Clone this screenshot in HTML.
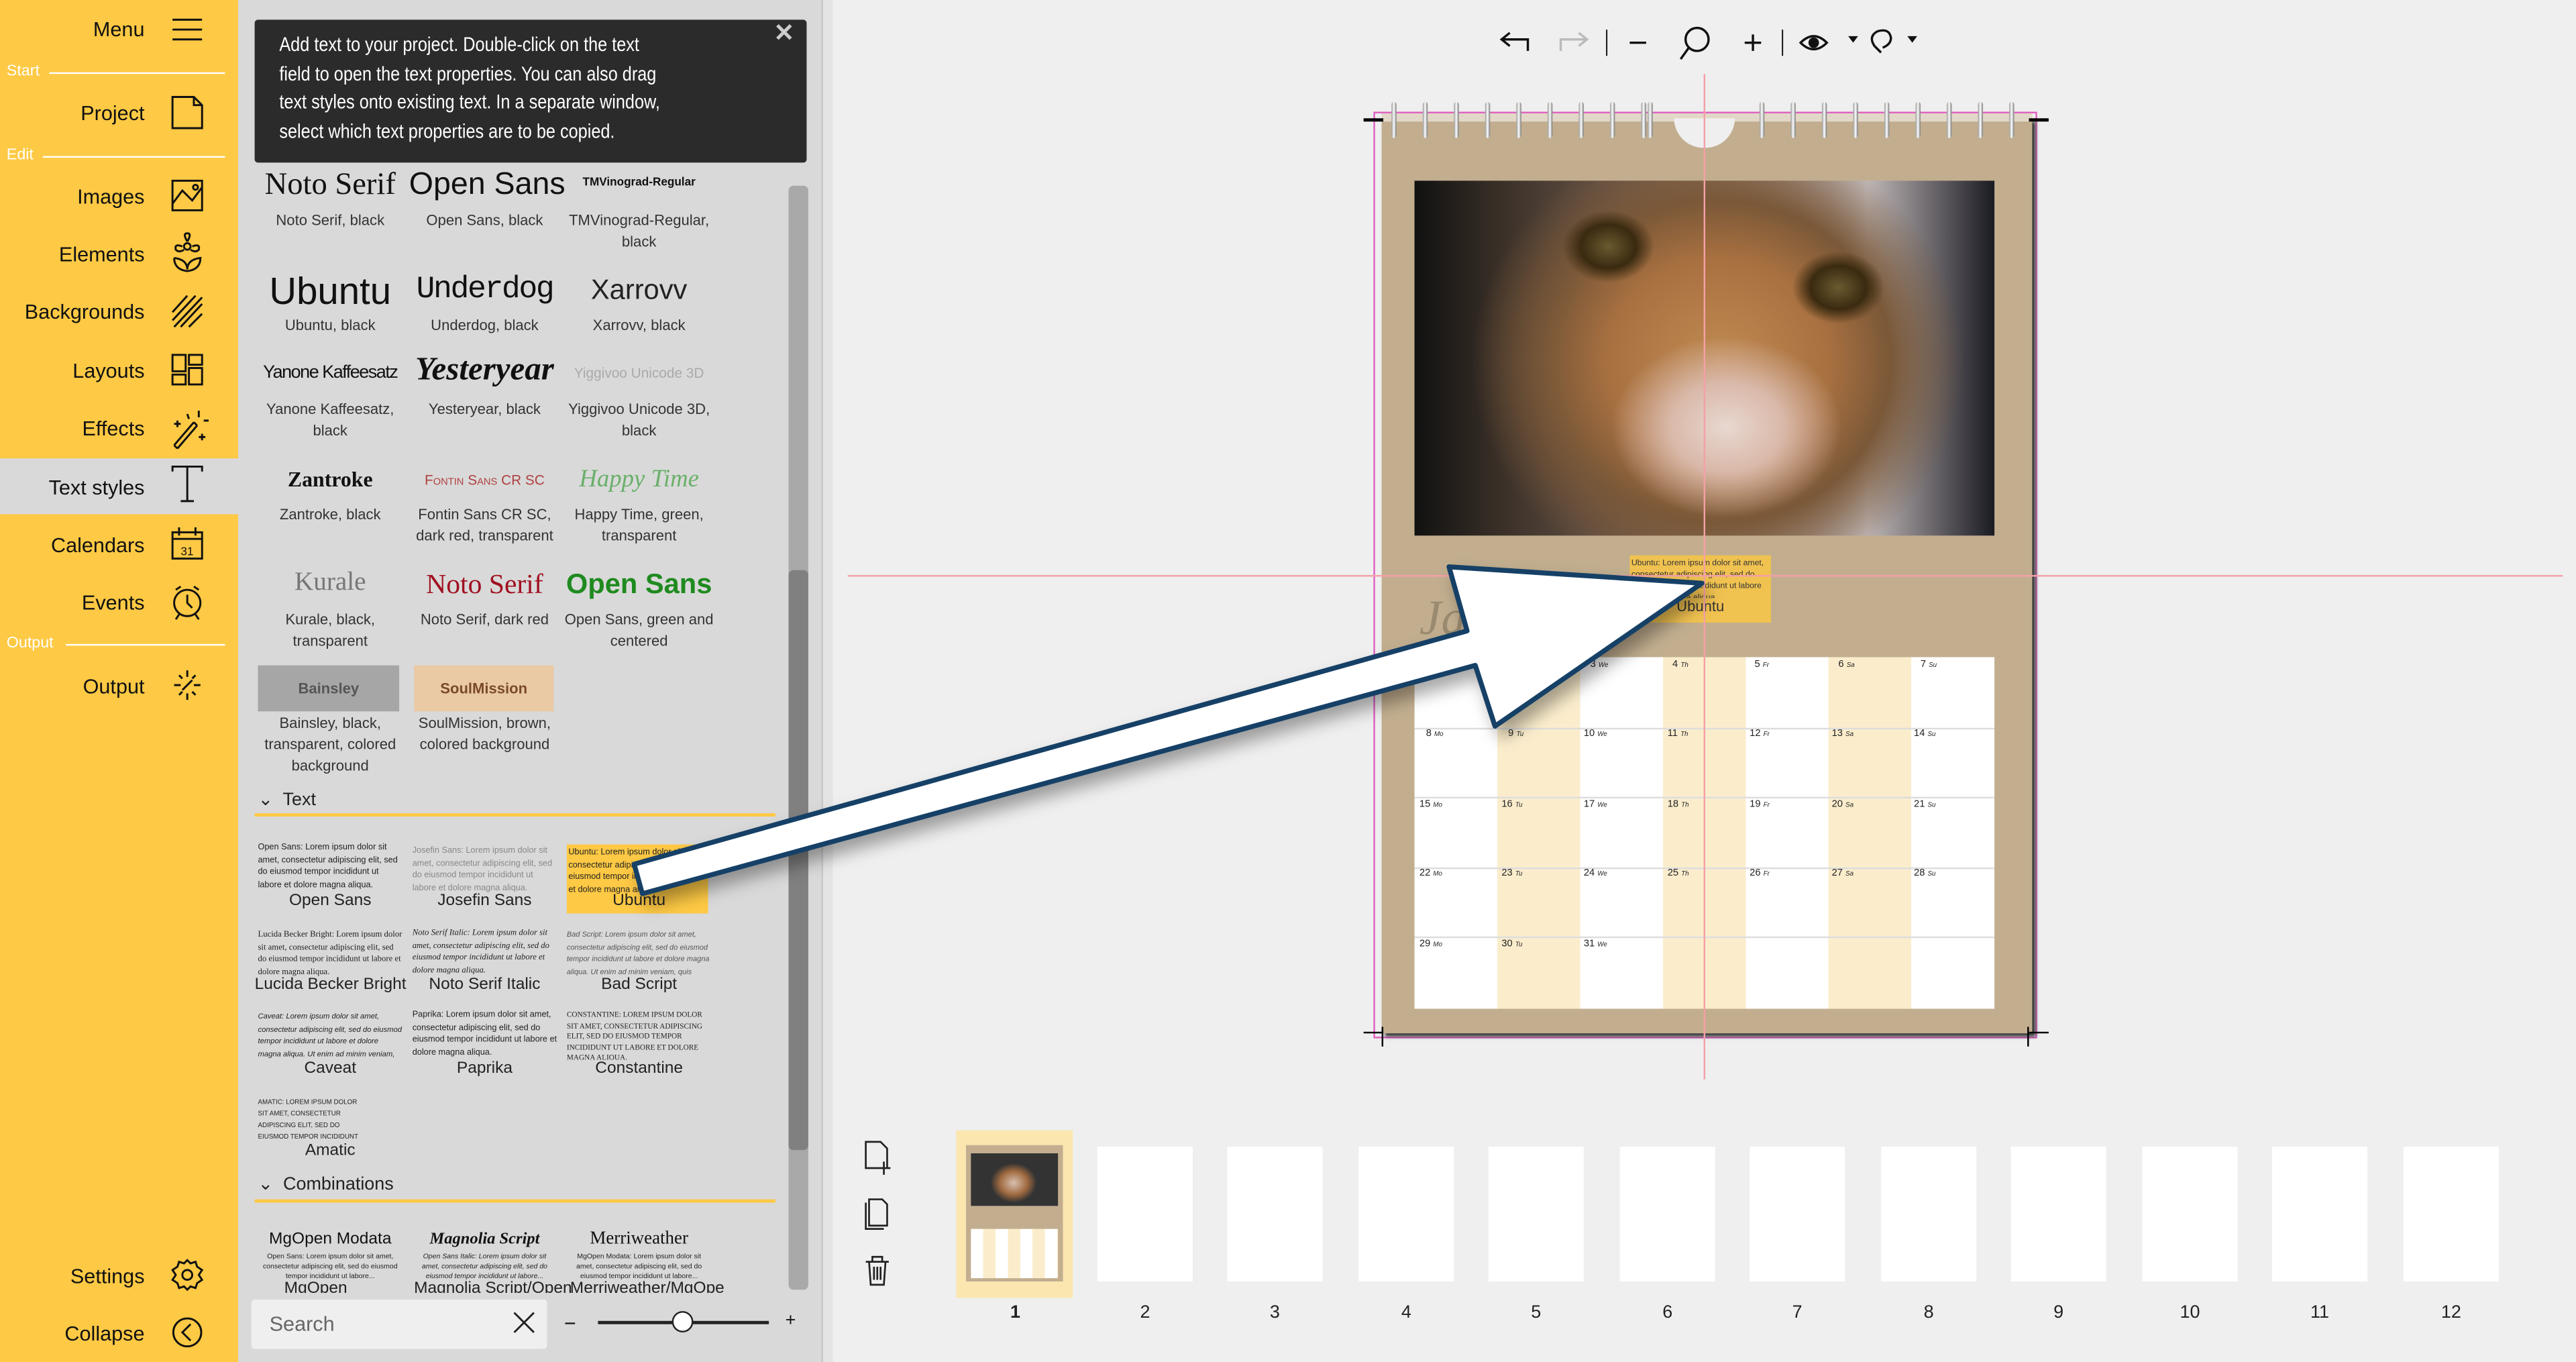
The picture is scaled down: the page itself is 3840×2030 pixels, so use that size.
<!DOCTYPE html>
<html><head><meta charset="utf-8">
<style>
*{margin:0;padding:0;box-sizing:border-box}
html,body{width:3840px;height:2030px;overflow:hidden;background:#efefef}
#w{position:absolute;left:0;top:0;width:1568px;height:829px;transform:scale(2.44898,2.4487);transform-origin:0 0;font-family:"Liberation Sans",sans-serif;color:#111}
.a{position:absolute}
#side{left:0;top:0;width:145px;height:829px;background:#fec944}
.sl{position:absolute;right:57px;font-size:12.5px;color:#111;white-space:nowrap}
.sec{position:absolute;left:4px;font-size:9.5px;color:#fff}
.secl{position:absolute;height:1px;background:#fff;right:8px}
#panel{left:145px;top:0;width:355px;height:829px;background:#d9d9d9}
.fc{position:absolute;width:92px;text-align:center;font-size:9px;color:#333;line-height:13px}
.fn{position:absolute;width:92px;text-align:center;white-space:nowrap}
.tx{position:absolute;font-size:5.2px;line-height:7.5px;color:#222;width:88px;overflow:hidden}
.tn{position:absolute;width:92px;text-align:center;font-size:10px;color:#222;white-space:nowrap}
.cal{left:861px;top:400px;width:353px;height:214px;background:linear-gradient(90deg,#fff 0,#fff 50.4px,#fbedcc 50.4px,#fbedcc 100.8px,#fff 100.8px,#fff 151.2px,#fbedcc 151.2px,#fbedcc 201.6px,#fff 201.6px,#fff 252px,#fbedcc 252px,#fbedcc 302.4px,#fff 302.4px)}
.d{position:absolute;font-size:6px;color:#222}
.d i{font-size:4px;vertical-align:top}
.th{position:absolute;top:698px;width:58px;height:82px;background:#fff}
.tnum{position:absolute;top:793px;font-size:11px;width:30px;text-align:center;color:#222}
.ring{position:absolute;top:62px;width:3px;height:22px;border-radius:2px;background:linear-gradient(90deg,#999,#fff,#777)}
.tl{display:block;white-space:nowrap;transform:scaleX(0.86);transform-origin:0 0}
</style></head><body><div id="w">

<div class="a" style="left:500px;top:0;width:7px;height:829px;background:#e4e4e4;border-left:1px solid #c8c8c8"></div>

<svg class="a" style="left:905px;top:12px" width="270" height="28" viewBox="0 0 270 28" fill="none" stroke="#111" stroke-width="1.4">
<path d="M25 19 V12 H10 M14 8 L9 12 L14 16"/>
<path d="M45 19 V12 H60 M56 8 L61 12 L56 16" stroke="#bbb"/>
<path d="M73 6 V22" stroke-width="0.8"/>
<path d="M87 14 H97"/>
<circle cx="128" cy="12" r="7"/><path d="M123 17 L118 24"/>
<path d="M157 14 H167 M162 9 V19"/>
<path d="M180 6 V22" stroke-width="0.8"/>
<path d="M191 14 Q199 6 207 14 Q199 22 191 14Z"/><circle cx="199" cy="14" r="2.5" fill="#111"/>
<path d="M220 10 L226 10 L223 14Z" fill="#111" stroke="none"/>
<path d="M240 20 L236 16 Q232 10 238 7 Q245 5 246 11 Q246 15 241 17" /><path d="M256 10 L262 10 L259 14Z" fill="#111" stroke="none"/>
</svg>

<div class="a" style="left:516px;top:350px;width:1044px;height:1px;background:#f4a0a8;z-index:5"></div>
<div class="a" style="left:1037px;top:45px;width:1px;height:612px;background:#f4a0a8;z-index:5"></div>

<div class="a" style="left:836px;top:68px;width:404px;height:564px;border:1px solid #e060c0"></div>
<div class="a" style="left:841px;top:72px;width:396px;height:557px;background:#c2ae8f;box-shadow:2px 2px 2px #333"></div>
<div class="a" style="left:841px;top:69px;width:396px;height:5px;background:#e2d8c8"></div>
<div class="a" style="left:1019px;top:72px;width:37px;height:18px;background:#efefef;border-radius:0 0 18px 18px"></div>
<div class="a" style="left:830px;top:72px;width:12px;height:1.5px;background:#000"></div>
<div class="a" style="left:1235px;top:72px;width:12px;height:1.5px;background:#000"></div>
<div class="a" style="left:830px;top:628px;width:12px;height:1px;background:#000"></div>
<div class="a" style="left:1235px;top:628px;width:12px;height:1px;background:#000"></div>
<div class="a" style="left:841px;top:625px;width:1px;height:12px;background:#000"></div>
<div class="a" style="left:1234px;top:625px;width:1px;height:12px;background:#000"></div>
<div class="ring" style="left:847px"></div><div class="ring" style="left:866px"></div><div class="ring" style="left:885px"></div><div class="ring" style="left:904px"></div><div class="ring" style="left:923px"></div><div class="ring" style="left:942px"></div><div class="ring" style="left:961px"></div><div class="ring" style="left:980px"></div><div class="ring" style="left:999px"></div><div class="ring" style="left:1003px"></div>
<div class="ring" style="left:1071px"></div><div class="ring" style="left:1090px"></div><div class="ring" style="left:1109px"></div><div class="ring" style="left:1128px"></div><div class="ring" style="left:1147px"></div><div class="ring" style="left:1166px"></div><div class="ring" style="left:1185px"></div><div class="ring" style="left:1204px"></div><div class="ring" style="left:1223px"></div>

<div class="a" style="left:861px;top:110px;width:353px;height:216px;background:radial-gradient(ellipse 70px 55px at 190px 150px,#e8d8d0 0,#d9b8a8 50%,transparent 100%),radial-gradient(ellipse 28px 22px at 118px 40px,#6a5a30 0,#3a2a10 60%,transparent 100%),radial-gradient(ellipse 28px 22px at 258px 65px,#6a5a30 0,#3a2a10 60%,transparent 100%),radial-gradient(ellipse 150px 140px at 185px 110px,#c08a52 0,#a87040 45%,#7a5838 70%,transparent 100%),linear-gradient(90deg,#111 0,#3a3028 15%,#8a7060 50%,#c0b8b8 78%,#1a1a22 100%)"></div>
<div class="a" style="left:864px;top:360px;font-size:30px;font-style:italic;color:#9a8a70;font-family:'Liberation Serif',serif">Ja</div>
<div class="a" style="left:992px;top:338px;width:86px;height:41px;background:#f0c250;font-size:5px;line-height:7px;color:#333;padding:2px 1px;overflow:hidden"><div style="height:24px;overflow:hidden">Ubuntu: Lorem ipsum dolor sit amet, consectetur adipiscing elit, sed do eiusmod tempor incididunt ut labore et dolore magna aliqua.</div><div style="text-align:center;font-size:9px;margin-top:2px">Ubuntu</div></div>

<div class="a cal">
<div style="position:absolute;left:0;right:0;top:42.6px;height:1px;background:#ddd"></div>
<div style="position:absolute;left:0;right:0;top:85.2px;height:1px;background:#ddd"></div>
<div style="position:absolute;left:0;right:0;top:127.8px;height:1px;background:#ddd"></div>
<div style="position:absolute;left:0;right:0;top:170.4px;height:1px;background:#ddd"></div>
<span class="d" style="left:107px;top:2px">3 <i>We</i></span><span class="d" style="left:157px;top:2px">4 <i>Th</i></span><span class="d" style="left:207px;top:2px">5 <i>Fr</i></span><span class="d" style="left:258px;top:2px">6 <i>Sa</i></span><span class="d" style="left:308px;top:2px">7 <i>Su</i></span>
<span class="d" style="left:7px;top:44px">8 <i>Mo</i></span><span class="d" style="left:57px;top:44px">9 <i>Tu</i></span><span class="d" style="left:103px;top:44px">10 <i>We</i></span><span class="d" style="left:154px;top:44px">11 <i>Th</i></span><span class="d" style="left:204px;top:44px">12 <i>Fr</i></span><span class="d" style="left:254px;top:44px">13 <i>Sa</i></span><span class="d" style="left:304px;top:44px">14 <i>Su</i></span>
<span class="d" style="left:3px;top:87px">15 <i>Mo</i></span><span class="d" style="left:53px;top:87px">16 <i>Tu</i></span><span class="d" style="left:103px;top:87px">17 <i>We</i></span><span class="d" style="left:154px;top:87px">18 <i>Th</i></span><span class="d" style="left:204px;top:87px">19 <i>Fr</i></span><span class="d" style="left:254px;top:87px">20 <i>Sa</i></span><span class="d" style="left:304px;top:87px">21 <i>Su</i></span>
<span class="d" style="left:3px;top:129px">22 <i>Mo</i></span><span class="d" style="left:53px;top:129px">23 <i>Tu</i></span><span class="d" style="left:103px;top:129px">24 <i>We</i></span><span class="d" style="left:154px;top:129px">25 <i>Th</i></span><span class="d" style="left:204px;top:129px">26 <i>Fr</i></span><span class="d" style="left:254px;top:129px">27 <i>Sa</i></span><span class="d" style="left:304px;top:129px">28 <i>Su</i></span>
<span class="d" style="left:3px;top:172px">29 <i>Mo</i></span><span class="d" style="left:53px;top:172px">30 <i>Tu</i></span><span class="d" style="left:103px;top:172px">31 <i>We</i></span>
</div>

<svg class="a" style="left:524px;top:692px" width="20" height="95" viewBox="0 0 20 95" fill="none" stroke="#222" stroke-width="1.1">
<path d="M3 3 H12 L16 7 V19 H3Z M14 15 V23 M10 19 H18"/>
<path d="M5 38 H13 L16 41 V54 H5Z M3 40 V56 H14"/>
<path d="M3 76 H17 M7 76 V73 H13 V76 M5 76 L6 90 H14 L15 76 M8 79 V87 M10 79 V87 M12 79 V87"/>
</svg>

<div class="a" style="left:582px;top:688px;width:71px;height:102px;background:#fbe6b0"></div>
<div class="a" style="left:588px;top:697px;width:59px;height:83px;background:#c2ae8f"></div>
<div class="a" style="left:591px;top:702px;width:53px;height:32px;background:radial-gradient(ellipse 14px 12px at 26px 18px,#d8c0b0,#a06a40 60%,#333 100%)"></div>
<div class="a" style="left:591px;top:748px;width:53px;height:30px;background:repeating-linear-gradient(90deg,#fff 0,#fff 7.5px,#fbedcc 7.5px,#fbedcc 15px)"></div>
<div class="th" style="left:668px"></div><div class="th" style="left:747px"></div><div class="th" style="left:827px"></div><div class="th" style="left:906px"></div><div class="th" style="left:986px"></div><div class="th" style="left:1065px"></div><div class="th" style="left:1145px"></div><div class="th" style="left:1224px"></div><div class="th" style="left:1304px"></div><div class="th" style="left:1383px"></div><div class="th" style="left:1463px"></div>
<div class="tnum" style="left:603px;font-weight:bold">1</div><div class="tnum" style="left:682px">2</div><div class="tnum" style="left:761px">3</div><div class="tnum" style="left:841px">4</div><div class="tnum" style="left:920px">5</div><div class="tnum" style="left:1000px">6</div><div class="tnum" style="left:1079px">7</div><div class="tnum" style="left:1159px">8</div><div class="tnum" style="left:1238px">9</div><div class="tnum" style="left:1318px">10</div><div class="tnum" style="left:1397px">11</div><div class="tnum" style="left:1477px">12</div>

<div class="a" id="side">
<div class="a" style="left:0;top:279px;width:145px;height:34px;background:#d9d9d9"></div>
<div class="sl" style="top:11px">Menu</div>
<div class="sec" style="top:38px">Start</div><div class="secl" style="left:30px;top:44px"></div>
<div class="sl" style="top:62px">Project</div>
<div class="sec" style="top:89px">Edit</div><div class="secl" style="left:26px;top:95px"></div>
<div class="sl" style="top:113px">Images</div>
<div class="sl" style="top:148px">Elements</div>
<div class="sl" style="top:183px">Backgrounds</div>
<div class="sl" style="top:219px">Layouts</div>
<div class="sl" style="top:254px">Effects</div>
<div class="sl" style="top:290px">Text styles</div>
<div class="sl" style="top:325px">Calendars</div>
<div class="sl" style="top:360px">Events</div>
<div class="sec" style="top:386px">Output</div><div class="secl" style="left:40px;top:392px"></div>
<div class="sl" style="top:411px">Output</div>
<div class="sl" style="top:770px">Settings</div>
<div class="sl" style="top:805px">Collapse</div>
<svg class="a" style="left:100px;top:0" width="30" height="829" viewBox="0 0 30 829" fill="none" stroke="#111" stroke-width="1.2">
<path d="M5 12 H23 M5 18 H23 M5 24 H23"/>
<path d="M5 59 H18 L23 64 V78 H5Z M18 59 V64 H23"/>
<rect x="5" y="110" width="18" height="18"/><path d="M5 124 L11 116 L17 122 L23 114"/><circle cx="19" cy="114" r="1.5"/>
<circle cx="14" cy="150" r="2"/><path d="M14 147 Q11 142 14 142 Q17 142 14 147 M17 150 Q22 148 21 152 Q19 154 16 152 M11 150 Q6 148 7 152 Q9 154 12 152 M6 157 Q14 158 14 164 Q14 158 22 157 Q22 164 14 165 Q6 164 6 157"/>
<path d="M5 190 L14 180 M5 195 L19 180 M6 199 L23 181 M10 199 L23 185 M15 199 L23 191"/>
<rect x="5" y="216" width="8" height="10"/><rect x="5" y="228" width="8" height="6"/><rect x="15" y="216" width="8" height="6"/><rect x="15" y="224" width="8" height="10"/>
<path d="M6 271 L18 257 M8 273 L20 259 M6 271 L8 273 M18 257 L20 259 M21 250 V254 M24 256 H27 M14 252 L15 255 M6 258 H10 M8 256 V260 M23 264 V268 M21 266 H25"/>
<path d="M5 287 V284 H23 V287 M14 284 V305 M10 305 H18"/>
<rect x="5" y="324" width="18" height="16"/><path d="M5 328 H23 M9 321 V326 M19 321 V326"/><text x="10" y="338" font-size="7" fill="#111" stroke="none" font-family="Liberation Sans">31</text>
<circle cx="14" cy="367" r="8"/><path d="M14 362 V367 L17 370 M7 359 L10 357 M21 359 L18 357 M9 374 L7 377 M19 374 L21 377"/>
<path d="M14 408 V412 M14 422 V426 M6 417 H10 M18 417 H22 M9 411 L11 413 M19 411 L17 413 M9 423 L11 421 M17 421 L19 423 M11 420 L17 414"/>
<circle cx="14" cy="776" r="3"/><path d="M14 767 L16 769 L19 768 L20 771 L23 773 L21 776 L23 779 L20 781 L19 784 L16 783 L14 785 L12 783 L9 784 L8 781 L5 779 L7 776 L5 773 L8 771 L9 768 L12 769Z"/>
<circle cx="14" cy="811" r="8.5"/><path d="M16 806 L11 811 L16 816"/>
</svg>
</div>

<div class="a" id="panel">
<div class="a" style="left:335px;top:113px;width:12px;height:672px;background:#a9a9a9;border-radius:3px"></div>
<div class="a" style="left:335px;top:347px;width:12px;height:353px;background:#808080;border-radius:3px"></div>

<div class="fn" style="left:10px;top:102px;font-size:19px;font-family:'Liberation Serif',serif">Noto Serif</div>
<div class="fn" style="left:104px;top:102px;font-size:19px">Open Sans</div>
<div class="fn" style="left:198px;top:108px;font-size:7px;font-weight:bold">TMVinograd-Regular</div>
<div class="fc" style="left:10px;top:128px">Noto Serif, black</div>
<div class="fc" style="left:104px;top:128px">Open Sans, black</div>
<div class="fc" style="left:198px;top:128px">TMVinograd-Regular, black</div>

<div class="fn" style="left:10px;top:164px;font-size:23px">Ubuntu</div>
<div class="fn" style="left:104px;top:165px;font-size:19px;font-family:'Liberation Mono',monospace;letter-spacing:-1px">Underdog</div>
<div class="fn" style="left:198px;top:167px;font-size:17px;font-weight:300;color:#222">Xarrovv</div>
<div class="fc" style="left:10px;top:192px">Ubuntu, black</div>
<div class="fc" style="left:104px;top:192px">Underdog, black</div>
<div class="fc" style="left:198px;top:192px">Xarrovv, black</div>

<div class="fn" style="left:10px;top:221px;font-size:11px;letter-spacing:-0.6px">Yanone Kaffeesatz</div>
<div class="fn" style="left:104px;top:214px;font-size:20px;font-style:italic;font-weight:bold;font-family:'Liberation Serif',serif">Yesteryear</div>
<div class="fn" style="left:198px;top:222px;font-size:8.5px;color:#aaa">Yiggivoo Unicode 3D</div>
<div class="fc" style="left:10px;top:243px">Yanone Kaffeesatz, black</div>
<div class="fc" style="left:104px;top:243px">Yesteryear, black</div>
<div class="fc" style="left:198px;top:243px">Yiggivoo Unicode 3D, black</div>

<div class="fn" style="left:10px;top:284px;font-size:13px;font-weight:bold;font-family:'Liberation Serif',serif">Zantroke</div>
<div class="fn" style="left:104px;top:287px;font-size:8.5px;color:#b04040;font-variant:small-caps">Fontin Sans CR SC</div>
<div class="fn" style="left:198px;top:284px;font-size:15px;font-style:italic;color:#6ab06a;font-family:'Liberation Serif',serif">Happy Time</div>
<div class="fc" style="left:10px;top:307px">Zantroke, black</div>
<div class="fc" style="left:104px;top:307px">Fontin Sans CR SC, dark red, transparent</div>
<div class="fc" style="left:198px;top:307px">Happy Time, green, transparent</div>

<div class="fn" style="left:10px;top:346px;font-size:16px;color:#777;font-family:'Liberation Serif',serif">Kurale</div>
<div class="fn" style="left:104px;top:346px;font-size:17px;color:#a01020;font-family:'Liberation Serif',serif">Noto Serif</div>
<div class="fn" style="left:198px;top:346px;font-size:17px;color:#1f8a1f;font-weight:bold">Open Sans</div>
<div class="fc" style="left:10px;top:371px">Kurale, black, transparent</div>
<div class="fc" style="left:104px;top:371px">Noto Serif, dark red</div>
<div class="fc" style="left:198px;top:371px">Open Sans, green and centered</div>

<div class="a" style="left:12px;top:405px;width:86px;height:28px;background:#a6a6a6;font-size:9px;text-align:center;line-height:28px;color:#555;font-weight:bold">Bainsley</div>
<div class="a" style="left:107px;top:405px;width:85px;height:28px;background:#eac9a5;font-size:9px;text-align:center;line-height:28px;color:#7a4a2a;font-weight:bold">SoulMission</div>
<div class="fc" style="left:10px;top:434px">Bainsley, black, transparent, colored background</div>
<div class="fc" style="left:104px;top:434px">SoulMission, brown, colored background</div>

<div class="a" style="left:12px;top:480px;font-size:11px;color:#222">&#8964;&nbsp; Text</div>
<div class="a" style="left:10px;top:495px;width:317px;height:2px;background:#fec944"></div>

<div class="tx" style="left:12px;top:513px;height:30px">Open Sans: Lorem ipsum dolor sit amet, consectetur adipiscing elit, sed do eiusmod tempor incididunt ut labore et dolore magna aliqua.</div>
<div class="tx" style="left:106px;top:515px;height:30px;color:#888">Josefin Sans: Lorem ipsum dolor sit amet, consectetur adipiscing elit, sed do eiusmod tempor incididunt ut labore et dolore magna aliqua.</div>
<div class="a" style="left:200px;top:514px;width:86px;height:42px;background:#fec944"></div>
<div class="tx" style="left:201px;top:516px;width:84px;height:30px">Ubuntu: Lorem ipsum dolor sit amet, consectetur adipiscing elit, sed do eiusmod tempor incididunt ut labore et dolore magna aliqua.</div>
<div class="tn" style="left:10px;top:543px">Open Sans</div>
<div class="tn" style="left:104px;top:543px">Josefin Sans</div>
<div class="tn" style="left:198px;top:543px">Ubuntu</div>

<div class="tx" style="left:12px;top:566px;height:30px;font-family:'Liberation Serif',serif">Lucida Becker Bright: Lorem ipsum dolor sit amet, consectetur adipiscing elit, sed do eiusmod tempor incididunt ut labore et dolore magna aliqua.</div>
<div class="tx" style="left:106px;top:565px;height:30px;font-style:italic;font-family:'Liberation Serif',serif">Noto Serif Italic: Lorem ipsum dolor sit amet, consectetur adipiscing elit, sed do eiusmod tempor incididunt ut labore et dolore magna aliqua.</div>
<div class="tx" style="left:200px;top:565px;height:30px;font-style:italic;color:#555;font-size:4.5px;line-height:7.5px">Bad Script: Lorem ipsum dolor sit amet, consectetur adipiscing elit, sed do eiusmod tempor incididunt ut labore et dolore magna aliqua. Ut enim ad minim veniam, quis nostrud exercitation ullamco laboris.</div>
<div class="tn" style="left:10px;top:594px">Lucida Becker Bright</div>
<div class="tn" style="left:104px;top:594px">Noto Serif Italic</div>
<div class="tn" style="left:198px;top:594px">Bad Script</div>

<div class="tx" style="left:12px;top:615px;height:30px;font-style:italic;font-size:4.6px;line-height:7.5px">Caveat: Lorem ipsum dolor sit amet, consectetur adipiscing elit, sed do eiusmod tempor incididunt ut labore et dolore magna aliqua. Ut enim ad minim veniam, quis nostrud exercitation...</div>
<div class="tx" style="left:106px;top:615px;height:30px">Paprika: Lorem ipsum dolor sit amet, consectetur adipiscing elit, sed do eiusmod tempor incididunt ut labore et dolore magna aliqua.</div>
<div class="tx" style="left:200px;top:615px;height:30px;font-family:'Liberation Serif',serif;font-size:4.6px;line-height:6.5px;text-transform:uppercase">Constantine: Lorem ipsum dolor sit amet, consectetur adipiscing elit, sed do eiusmod tempor incididunt ut labore et dolore magna aliqua.</div>
<div class="tn" style="left:10px;top:645px">Caveat</div>
<div class="tn" style="left:104px;top:645px">Paprika</div>
<div class="tn" style="left:198px;top:645px">Constantine</div>

<div class="tx" style="left:12px;top:667px;height:28px;font-size:4px;line-height:7px;text-transform:uppercase;width:66px">Amatic: Lorem ipsum dolor sit amet, consectetur adipiscing elit, sed do eiusmod tempor incididunt ut labore et dolore magna aliqua.</div>
<div class="tn" style="left:10px;top:695px">Amatic</div>

<div class="a" style="left:12px;top:714px;font-size:11px;color:#222">&#8964;&nbsp; Combinations</div>
<div class="a" style="left:10px;top:730px;width:317px;height:2px;background:#fec944"></div>

<div class="fn" style="left:10px;top:749px;font-size:10px">MgOpen Modata</div>
<div class="fn" style="left:104px;top:749px;font-size:10px;font-style:italic;font-weight:bold;font-family:'Liberation Serif',serif">Magnolia Script</div>
<div class="fn" style="left:198px;top:748px;font-size:11px;font-family:'Liberation Serif',serif">Merriweather</div>
<div class="tx" style="left:14px;top:762px;font-size:4.3px;line-height:6px;text-align:center;width:84px;height:18px">Open Sans: Lorem ipsum dolor sit amet, consectetur adipiscing elit, sed do eiusmod tempor incididunt ut labore...</div>
<div class="tx" style="left:108px;top:762px;font-size:4.3px;line-height:6px;text-align:center;width:84px;font-style:italic;height:18px">Open Sans Italic: Lorem ipsum dolor sit amet, consectetur adipiscing elit, sed do eiusmod tempor incididunt ut labore...</div>
<div class="tx" style="left:202px;top:762px;font-size:4.3px;line-height:6px;text-align:center;width:84px;height:18px">MgOpen Modata: Lorem ipsum dolor sit amet, consectetur adipiscing elit, sed do eiusmod tempor incididunt ut labore...</div>
<div class="a" style="left:10px;top:779px;width:300px;height:9px;overflow:hidden;font-size:10px;color:#222;white-space:nowrap"><span style="position:absolute;left:18px">MgOpen</span><span style="position:absolute;left:97px">Magnolia Script/Open</span><span style="position:absolute;left:192px">Merriweather/MgOpe</span></div>

<div class="a" style="left:0;top:787px;width:355px;height:42px;background:#d9d9d9"></div>
<div class="a" style="left:8px;top:791px;width:180px;height:30px;background:#efefef;border-radius:2px;font-size:12.5px;color:#666;padding:8px 11px">Search</div>
<svg class="a" style="left:166px;top:797px" width="16" height="16" fill="none" stroke="#222" stroke-width="1.2"><path d="M2 2 L14 14 M14 2 L2 14"/></svg>
<div class="a" style="left:199px;top:805px;width:6px;height:1px;background:#222"></div>
<div class="a" style="left:219px;top:804px;width:104px;height:2px;background:#222"></div>
<div class="a" style="left:264px;top:798px;width:13px;height:13px;border-radius:50%;background:#fff;border:1.2px solid #222"></div>
<div class="a" style="left:333px;top:798px;font-size:11px">+</div>

<div class="a" style="left:10px;top:12px;width:336px;height:87px;background:#2b2b2b;border-radius:2px;color:#fff;font-size:12px;line-height:17.7px;padding:7px 10px 0 15px"><span class="tl">Add text to your project. Double-click on the text</span><span class="tl">field to open the text properties. You can also drag</span><span class="tl">text styles onto existing text. In a separate window,</span><span class="tl">select which text properties are to be copied.</span></div>
<div class="a" style="left:326px;top:11px;color:#ccc;font-size:15px;font-weight:bold">&#10005;</div>
</div>

<svg class="a" style="left:0;top:0;z-index:10" width="1568" height="829" viewBox="0 0 1568 829">
<defs><filter id="sh" x="-20%" y="-20%" width="140%" height="140%"><feDropShadow dx="4" dy="6" stdDeviation="5" flood-color="#000" flood-opacity="0.35"/></filter></defs>
<polygon points="386,526 893,384 882,345 1036,355 910,442 898,405 391,544" fill="#fff" stroke="#123f66" stroke-width="3" stroke-linejoin="round" filter="url(#sh)"/>
</svg>
</div></body></html>
